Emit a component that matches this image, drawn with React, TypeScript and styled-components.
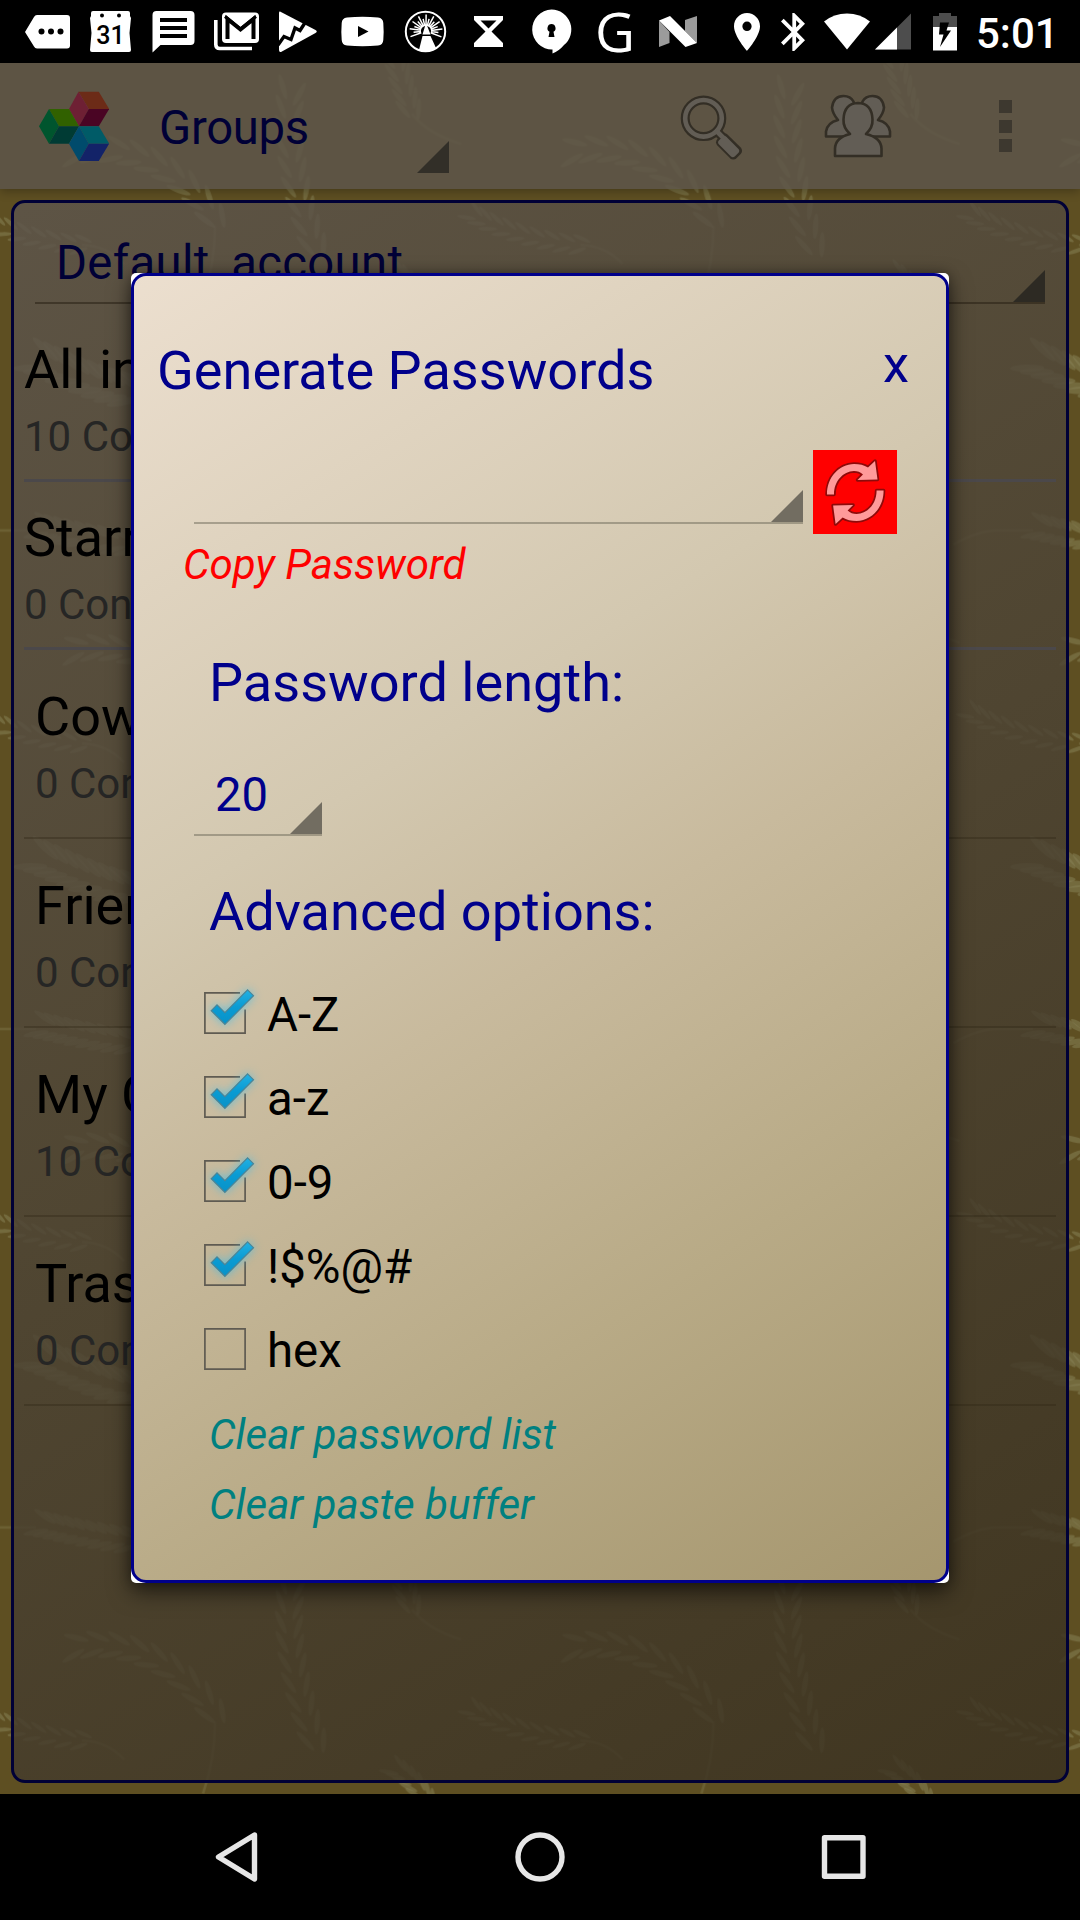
import React from 'react';
import styled, { createGlobalStyle, css } from 'styled-components';

const NAVY = '#00008b';
const NAVY_DIM = '#000036';

const GlobalStyle = createGlobalStyle`
  body {
    margin: 0;
    background: #000;
  }
  * {
    box-sizing: border-box;
  }
`;

const Phone = styled.div`
  display: flex;
  flex-direction: column;
  width: 1080px;
  height: 1920px;
  overflow: hidden;
  background: #000;
  font-family: Roboto, 'Liberation Sans', sans-serif;
`;

/* ---------- status bar ---------- */

const StatusBar = styled.header`
  display: flex;
  align-items: center;
  flex: none;
  height: 63px;
  padding-left: 16px;
  background: #000;
`;

const Slot = styled.svg`
  flex: none;
  width: 63px;
  height: 63px;
  overflow: visible;
  fill: #fff;
`;

const SystemIcon = styled.svg<{ $w: number; $gap: number }>`
  flex: none;
  width: ${(p) => p.$w}px;
  height: 38px;
  margin-left: ${(p) => p.$gap}px;
  fill: #fff;
`;

const Clock = styled.time`
  margin: 4px 0 0 19px;
  color: #fff;
  font-size: 42px;
  font-weight: 500;
  line-height: 50px;
`;

/* ---------- activity ---------- */

const Activity = styled.main`
  position: relative;
  display: flex;
  flex-direction: column;
  flex: none;
  height: 1731px;
  background: #5e4f22;
`;

const Backdrop = styled.svg`
  position: absolute;
  inset: 0;
  width: 1080px;
  height: 1731px;
`;

const AppBar = styled.div`
  position: relative;
  display: flex;
  align-items: center;
  flex: none;
  height: 126px;
  padding-left: 39px;
  background: rgba(93, 85, 73, 0.88);
  box-shadow: 0 2px 10px rgba(0, 0, 0, 0.3);
`;

const Logo = styled.svg`
  width: 70px;
  height: 70px;
`;

const BarSpinner = styled.div`
  display: flex;
  align-items: center;
  justify-content: space-between;
  width: 290px;
  height: 126px;
  margin-left: 50px;
  color: ${NAVY_DIM};
  font-size: 47.25px;
  line-height: 56px;
`;

const BarTitle = styled.span`
  padding-top: 4px;
  letter-spacing: -0.3px;
`;

const Corner = styled.i<{ $color: string }>`
  flex: none;
  align-self: flex-end;
  width: 32px;
  height: 32px;
  background: ${(p) => p.$color};
  clip-path: polygon(100% 0, 100% 100%, 0 100%);
`;

const BarCorner = styled(Corner)`
  margin-bottom: 16px;
`;

const BarIcon = styled.svg<{ $w: number; $gap: number }>`
  width: ${(p) => p.$w}px;
  height: 68px;
  margin-left: ${(p) => p.$gap}px;
  overflow: visible;
`;

const Overflow = styled.div`
  display: flex;
  flex-direction: column;
  gap: 6.5px;
  margin-left: 108px;
`;

const Dot = styled.i`
  width: 13px;
  height: 13px;
  background: #3d382f;
`;

const Panel = styled.section`
  position: relative;
  flex: 1;
  margin: 11px 11px 11px;
  padding: 19px 10px 0;
  border: 3px solid ${NAVY_DIM};
  border-radius: 14px;
  background: linear-gradient(
    148deg,
    rgba(93, 85, 76, 0.84),
    rgba(78, 69, 54, 0.84) 45%,
    rgba(58, 49, 32, 0.84)
  );
`;

const SpinnerBox = styled.div<{ $width: number; $height: number; $dim?: boolean }>`
  display: flex;
  flex: none;
  align-items: center;
  justify-content: space-between;
  width: ${(p) => p.$width}px;
  height: ${(p) => p.$height}px;
  padding-left: 21px;
  color: ${(p) => (p.$dim ? NAVY_DIM : NAVY)};
  font-size: 47.25px;
  line-height: 56px;
  ${(p) =>
    p.$dim
      ? css`
          border-bottom: 2px solid rgba(35, 28, 15, 0.5);
        `
      : css`
          border-bottom: 2px solid rgba(110, 105, 90, 0.5);
        `}
`;

const AccountSpinner = styled(SpinnerBox)`
  margin-left: 11px;
  letter-spacing: 0.33px;
`;

const List = styled.ul`
  margin: 10px 0 0;
  padding: 0;
  list-style: none;
`;

const Item = styled.li<{ $nested: boolean }>`
  height: ${(p) => (p.$nested ? 189 : 168)}px;
  padding: ${(p) => (p.$nested ? '34px 0 0 11px' : '23px 0 0 0')};
  border-bottom: ${(p) =>
    p.$nested ? '2px solid rgba(45, 36, 20, 0.35)' : '3px solid #4b484a'};
`;

const ItemTitle = styled.div`
  color: #000;
  font-size: 54px;
  line-height: 65px;
`;

const ItemCount = styled.div`
  margin-top: 10px;
  color: #262625;
  font-size: 42px;
  line-height: 49px;
`;

/* ---------- dialog ---------- */

const DialogLayer = styled.div`
  position: absolute;
  inset: 0;
  display: flex;
  align-items: center;
  justify-content: center;
`;

const Window = styled.div`
  width: 818px;
  height: 1310px;
  margin-bottom: 1px;
  border-radius: 5px;
  background: #fff;
  box-shadow: 0 9px 22px rgba(0, 0, 0, 0.55), 0 0 12px rgba(0, 0, 0, 0.3);
`;

const Dialog = styled.div`
  height: 100%;
  padding: 62px 49px 0 60px;
  border: 3px solid ${NAVY};
  border-radius: 15px;
  background: linear-gradient(148deg, #ecdfcf 0%, #d3c8b0 36%, #c8ba9d 52%, #b8aa86 74%, #a5966e 100%);
  background-clip: border-box;
  background-origin: border-box;
`;

const Header = styled.div`
  display: flex;
  justify-content: space-between;
  margin: 0 -12px 0 -37px;
  height: 65px;
  color: ${NAVY};
`;

const Title = styled.h1`
  margin: 0;
  font-size: 54.1px;
  font-weight: 400;
  line-height: 65px;
`;

const Close = styled.span`
  font-size: 52.5px;
  line-height: 52px;
`;

const GenerateRow = styled.div`
  display: flex;
  align-items: flex-start;
  gap: 10px;
  height: 84px;
  margin-top: 47px;
`;

const Refresh = styled.button`
  flex: none;
  width: 84px;
  height: 84px;
  padding: 0;
  border: 0;
  background: #f00;
`;

const LinkText = styled.div<{ $color: string; $height: number; $indent: number }>`
  height: ${(p) => p.$height}px;
  margin-left: ${(p) => p.$indent}px;
  color: ${(p) => p.$color};
  font-size: 42.1px;
  font-style: italic;
  line-height: ${(p) => p.$height}px;
`;

const Label = styled.div<{ $top: number }>`
  margin: ${(p) => p.$top}px 0 0 15px;
  color: ${NAVY};
  font-size: 54.1px;
  line-height: 71px;
`;

const LengthSpinner = styled(SpinnerBox)`
  margin-top: 36px;
`;

const SpinnerValue = styled.span`
  padding-top: 2px;
`;

const Options = styled.div`
  margin: 24px 0 9px 10px;
`;

const Option = styled.label`
  display: flex;
  align-items: center;
  gap: 21px;
  height: 84px;
  color: #000;
  font-size: 47.4px;
  line-height: 56px;
`;

const OptionText = styled.span`
  padding-top: 4px;
`;

const Box = styled.svg`
  width: 42px;
  height: 42px;
  overflow: visible;
`;

const Tick = styled.path`
  fill: url(#tick);
  stroke: #4b8496;
  stroke-width: 1.2;
  filter: drop-shadow(0 0 5px rgba(60, 190, 235, 0.7));
`;

/* ---------- navigation bar ---------- */

const NavBar = styled.nav`
  display: flex;
  align-items: center;
  justify-content: space-between;
  flex: 1;
  padding: 0 205px;
  background: #000;
`;

const NavIcon = styled.svg`
  width: 62px;
  height: 62px;
  fill: none;
  stroke: #e6e6e6;
  stroke-width: 5.4;
  stroke-linejoin: round;
`;

/* ---------- drawings ---------- */

type Ear = { pts: [number, number][]; size: number };

/** Heads of wheat: grains are laid alternately along each spine. */
const ears: Ear[] = [
  { pts: [[292, 92], [286, 142], [298, 197], [316, 246]], size: 15 },
  { pts: [[76, 150], [130, 141], [185, 170], [215, 218]], size: 15 },
  { pts: [[473, 213], [495, 227], [540, 242], [580, 244]], size: 11 },
  { pts: [[-25, 213], [-3, 227], [42, 242], [82, 244]], size: 11 },
  { pts: [[396, 272], [415, 284], [432, 304], [440, 334]], size: 12 },
  { pts: [[385, 8], [392, 44], [402, 80], [412, 110]], size: 13 },
  { pts: [[40, 358], [66, 368], [98, 384], [131, 390]], size: 20 },
  { pts: [[42, 28], [66, 33], [95, 40], [131, 44]], size: 15 },
];

const bezier = (p: [number, number][], t: number, axis: 0 | 1) => {
  const u = 1 - t;
  return u * u * u * p[0][axis] + 3 * u * u * t * p[1][axis] + 3 * u * t * t * p[2][axis] + t * t * t * p[3][axis];
};

const Grains = ({ ear }: { ear: Ear }) => (
  <>
    {Array.from({ length: 9 }, (_, i) => {
      const t = i / 8;
      const x = bezier(ear.pts, t, 0);
      const y = bezier(ear.pts, t, 1);
      const dx = bezier(ear.pts, t + 0.02, 0) - x;
      const dy = bezier(ear.pts, t + 0.02, 1) - y;
      const a = (Math.atan2(dy, dx) * 180) / Math.PI;
      return (
        <g key={i} transform={`translate(${x} ${y}) rotate(${a})`}>
          <ellipse cx={-ear.size * 0.5} cy={ear.size * 0.5} rx={ear.size * 0.85} ry={ear.size * 0.18} transform="rotate(-22)" />
          <ellipse cx={-ear.size * 0.1} cy={-ear.size * 0.5} rx={ear.size * 0.85} ry={ear.size * 0.18} transform="rotate(22)" />
        </g>
      );
    })}
  </>
);

const Wheat = () => (
  <Backdrop viewBox="0 63 1080 1731">
    <defs>
      <pattern id="wheat" width="498.5" height="498.5" patternUnits="userSpaceOnUse">
        <g fill="#858054" fillOpacity="0.55">
          {ears.map((ear, i) => (
            <Grains key={i} ear={ear} />
          ))}
        </g>
        <g fill="none" stroke="#858054" strokeWidth="2.5" opacity="0.35">
          <path d="M215 226 Q215 264 203 298 M82 245 Q108 246 124 264 M412 114 Q428 134 461 144 M0 32 H36 M455 46 Q480 32 499 32" />
        </g>
      </pattern>
    </defs>
    <rect x="0" y="63" width="1080" height="1731" fill="url(#wheat)" />
  </Backdrop>
);

const rays = Array.from({ length: 17 }, (_, i) => (-200 + i * 13.8) * (Math.PI / 180));

const StatusIcons = () => (
  <>
    <Slot viewBox="0 0 63 63">
      <path d="M21 15H51Q54 15 54 18V45.500Q54 48.500 51 48.500H21Q19 48.500 18 46.500L9 32L18 17Q19 15 21 15Z" />
      <g fill="#000">
        <circle cx="25.500" cy="31.500" r="3" />
        <circle cx="35" cy="31.500" r="3" />
        <circle cx="44.500" cy="31.500" r="3" />
      </g>
    </Slot>
    <Slot viewBox="0 0 63 63">
      <path d="M14 11H49Q51 11 51 13V16L52 18L50.500 33L52 50Q52 52 50 52H13Q11 52 11 50L12.500 33L11 18L12 16V13Q12 11 14 11Z" />
      <circle cx="23" cy="15.500" r="2" fill="#000" />
      <circle cx="40" cy="15.500" r="2" fill="#000" />
      <text x="31.500" y="44" fill="#000" fontSize="25" fontWeight="500" textAnchor="middle">31</text>
    </Slot>
    <Slot viewBox="0 0 63 63">
      <path d="M14.500 11H48.500Q52.500 11 52.500 15V41Q52.500 45 48.500 45H18.500L10.500 52.500V15Q10.500 11 14.500 11Z" />
      <path d="M18 18H45V22H18ZM18 26H45V30H18ZM18 34H45V38H18Z" fill="#000" />
    </Slot>
    <Slot viewBox="0 0 63 63">
      <rect x="17" y="12.500" width="37" height="30.500" rx="4" />
      <path d="M22.500 39V19L35.500 29.500L48.500 19V39" fill="none" stroke="#000" strokeWidth="4" />
      <path d="M20 16.500L35.500 29L51 16.500" fill="none" stroke="#000" strokeWidth="3" />
      <path d="M10.800 20V44.500Q10.800 48.500 14.800 48.500H47" fill="none" stroke="#fff" strokeWidth="3.600" />
    </Slot>
    <Slot viewBox="0 0 63 63">
      <path d="M12 11.500L47.500 30Q50 31.500 47.500 33L13 52Q11 52.500 11 50V13Q11 11 12 11.500Z" />
      <path d="M10 45L16 36.500L23 39.500L27 28L32 30.500L37.500 22" fill="none" stroke="#000" strokeWidth="3.400" />
    </Slot>
    <Slot viewBox="0 0 63 63">
      <path d="M16 17.500Q31.500 16 47 17.500Q52 18 52.300 23Q53 31.500 52.300 40Q52 45 47 45.500Q31.500 47 16 45.500Q11 45 10.700 40Q10 31.500 10.700 23Q11 18 16 17.500Z" />
      <path d="M27 26L37.500 31.500L27 37Z" fill="#000" />
    </Slot>
    <Slot viewBox="0 0 63 63">
      <circle cx="31.500" cy="31.500" r="19.700" fill="none" stroke="#fff" strokeWidth="2" />
      <path
        d={rays.map((a, i) => {
          const r = i % 2 ? 12.5 : 16.5;
          return `M${32 + 5 * Math.cos(a)} ${31 + 5 * Math.sin(a)}L${32 + r * Math.cos(a)} ${31 + r * Math.sin(a)}`;
        }).join('')}
        stroke="#fff"
        strokeWidth="1.500"
      />
      <path d="M32 23L36.500 34.500H28.500ZM28.500 36H36.500L42 48Q32 54.500 25 50Z" />
    </Slot>
    <Slot viewBox="0 0 63 63">
      <path d="M17 16H46V20L34.500 31.500L46 43V47H17V43L28.500 31.500L17 20ZM23.500 20.500L31.500 28.500L39.500 20.500Z" fillRule="evenodd" />
    </Slot>
    <Slot viewBox="0 0 63 63">
      <path d="M31.500 9.500A19.800 20 0 0 1 44 45Q39 51 32.500 53.500V49.500A19.800 20 0 1 1 31.500 9.500Z" />
      <path d="M31.500 24A4.200 4.200 0 0 1 33.500 31.800L34.500 37H28.500L29.500 31.800A4.200 4.200 0 0 1 31.500 24Z" fill="#000" />
    </Slot>
    <Slot viewBox="0 0 63 63">
      <text x="32" y="51.500" fontFamily="'Open Sans', sans-serif" fontSize="55" textAnchor="middle">G</text>
    </Slot>
    <Slot viewBox="0 0 63 63">
      <path d="M13 20.500L23.500 32V43L13 47ZM39 20L51 16V43L39 31Z" fill="#9b9b9b" />
      <path d="M13 20.500L24 16L51 43L39.500 47Z" />
    </Slot>
    <SystemIcon $w={26} $gap={25} viewBox="5 2 14 20" preserveAspectRatio="none">
      <path d="M12 2C8.130 2 5 5.130 5 9c0 5.250 7 13 7 13s7-7.750 7-13c0-3.870-3.130-7-7-7zm0 9.500a2.500 2.500 0 0 1 0-5 2.500 2.500 0 0 1 0 5z" />
    </SystemIcon>
    <SystemIcon $w={24} $gap={21} viewBox="5 2 12.7 20" preserveAspectRatio="none">
      <path d="M17.710 7.710L12 2h-1v7.590L6.410 5 5 6.410 10.590 12 5 17.590 6.410 19 11 14.410V22h1l5.710-5.710-4.300-4.290 4.300-4.290zM13 5.830l1.880 1.880L13 9.590V5.830zm1.880 10.460L13 18.170v-3.760l1.880 1.880z" />
    </SystemIcon>
    <SystemIcon $w={46} $gap={19} viewBox="824 12.5 46 38">
      <path d="M824 21Q834 13 847 13Q860 13 870 21L847 49Z" />
    </SystemIcon>
    <SystemIcon $w={36} $gap={5} viewBox="875 12.500 36 38">
      <path d="M875 49L911 13V49Z" fill="#4d4d4d" />
      <path d="M875 49L897 27V49Z" />
    </SystemIcon>
    <SystemIcon $w={24} $gap={22} viewBox="933 12.500 24 38">
      <path d="M933 15.500H939V12.500H951V15.500H957V27H933Z" fill="#4d4d4d" />
      <path d="M933 26.500H957V50H933Z" />
      <path d="M940 22H949L946.500 30H951L940 46.500L943.500 34H939Z" fill="#000" />
    </SystemIcon>
  </>
);

const CubesLogo = () => (
  <Logo viewBox="39 91 70 70">
    <path d="M78.500 91.700H98.800L109.200 109H88.800Z" fill="#6c2b17" />
    <path d="M78.500 91.700L88.800 109L79 126.300L69 109Z" fill="#6e2034" />
    <path d="M88.800 109H109.200L98.800 126.300H79Z" fill="#4a0524" />
    <path d="M49 109H69L79 126.300H59Z" fill="#316100" />
    <path d="M49 109L59 126.300L49 143.700L39 126.300Z" fill="#00552e" />
    <path d="M59 126.300H79L69 143.700H49Z" fill="#003b34" />
    <path d="M79 126.300H98.800L109.200 143.700H88.800Z" fill="#005b67" />
    <path d="M79 126.300L88.800 143.700L79 161L69 143.700Z" fill="#004b6c" />
    <path d="M88.800 143.700H109.200L98.800 161H79Z" fill="#132368" />
  </Logo>
);

const SearchIcon = () => (
  <BarIcon $w={62} $gap={231.5} viewBox="680.500 92 62 68">
    <g fill="none" stroke="#332e25" strokeLinecap="round">
      <circle cx="703" cy="118.300" r="18.300" strokeWidth="9" />
      <path d="M717 132L722 137" strokeWidth="9" />
    </g>
    <rect x="719" y="129.500" width="27" height="15" rx="4.500" fill="#332e25" transform="rotate(45 719 137)" />
    <g fill="none" stroke="#625d55" strokeLinecap="round">
      <circle cx="703" cy="118.300" r="18.300" strokeWidth="4.600" />
      <path d="M717 132L724 139" strokeWidth="4.600" />
    </g>
    <rect x="721" y="132" width="22.500" height="10.600" rx="3" fill="#625d55" transform="rotate(45 719 137)" />
  </BarIcon>
);

const PeopleIcon = () => (
  <BarIcon $w={66} $gap={82.5} viewBox="825.500 91.500 66 68">
    <g fill="#625d55" stroke="#332e25" strokeWidth="2.600" strokeLinejoin="round">
      <path d="M826.500 136V131Q828 122 838.500 119.500Q833 113 832.500 107Q834 95.500 844 95.500Q851 95.500 854 101L860 136Z" />
      <path d="M890.500 136V131Q889 122 878.500 119.500Q884 113 884.500 107Q883 95.500 873 95.500Q866 95.500 863 101L857 136Z" />
      <path d="M858.500 102.500Q872.500 103 873 119Q873.500 127 866.500 133.500Q881.500 137 882 148V155.500H835.500V148Q836 137 850.500 133.500Q843.500 127 844 119Q844.500 103 858.500 102.500Z" />
    </g>
  </BarIcon>
);

const arrow = 'M14 44.500C14 27 26 14.500 41 14C46.500 14 51 15 55 17.500L62 11L64.500 29.500L44.500 30L50 24.500C47.500 22 44.500 21 41 21C30 21.500 21 31 21 44.500Z';

const RefreshIcon = () => (
  <svg width="84" height="84" viewBox="0 0 84 84">
    <g fill="#ff9a9a" stroke="#8e0a0a" strokeWidth="3.500" strokeLinejoin="round" paintOrder="stroke">
      <path d={arrow} />
      <path d={arrow} transform="rotate(180 42.300 42.500)" />
    </g>
  </svg>
);

const CheckBox = ({ checked }: { checked: boolean }) => (
  <Box viewBox="0 0 42 42">
    <path
      d={checked ? 'M36 0.900H0.900V41.100H41.100V17.500' : 'M0.900 0.900H41.100V41.100H0.900Z'}
      fill="none"
      stroke="#5f5b52"
      strokeWidth="1.700"
    />
    {checked && <Tick d="M43.600 -2.200L49.500 3.700L20.900 32.300L7.200 18.800L13 12.800L20.900 20.700Z" />}
  </Box>
);

/* ---------- data ---------- */

const groups = [
  { name: 'All in', count: '10 Co', nested: false },
  { name: 'Starr', count: '0 Con', nested: false },
  { name: 'Cow', count: '0 Con', nested: true },
  { name: 'Frien', count: '0 Con', nested: true },
  { name: 'My C', count: '10 Co', nested: true },
  { name: 'Tras', count: '0 Con', nested: true },
];

const options = [
  { label: 'A-Z', checked: true },
  { label: 'a-z', checked: true },
  { label: '0-9', checked: true },
  { label: '!$%@#', checked: true },
  { label: 'hex', checked: false },
];

export default function App() {
  return (
    <Phone>
      <GlobalStyle />
      <StatusBar>
        <StatusIcons />
        <Clock>5:01</Clock>
      </StatusBar>

      <Activity>
        <Wheat />
        <AppBar>
          <CubesLogo />
          <BarSpinner>
            <BarTitle>Groups</BarTitle>
            <BarCorner $color="#322f28" />
          </BarSpinner>
          <SearchIcon />
          <PeopleIcon />
          <Overflow>
            <Dot />
            <Dot />
            <Dot />
          </Overflow>
        </AppBar>

        <Panel>
          <AccountSpinner $width={1010} $height={82} $dim>
            <SpinnerValue>Default_account</SpinnerValue>
            <Corner $color="#2d2a23" />
          </AccountSpinner>
          <List>
            {groups.map((g) => (
              <Item key={g.name} $nested={g.nested}>
                <ItemTitle>{g.name}</ItemTitle>
                <ItemCount>{g.count}</ItemCount>
              </Item>
            ))}
          </List>
        </Panel>

        <DialogLayer>
          <Window>
            <Dialog>
              <Header>
                <Title>Generate Passwords</Title>
                <Close>x</Close>
              </Header>

              <GenerateRow>
                <SpinnerBox $width={609} $height={74}>
                  <span />
                  <Corner $color="#726d61" />
                </SpinnerBox>
                <Refresh>
                  <RefreshIcon />
                </Refresh>
              </GenerateRow>
              <LinkText $color="#ff0000" $height={61} $indent={-11}>
                Copy Password
              </LinkText>

              <Label $top={52}>Password length:</Label>
              <LengthSpinner $width={128} $height={82}>
                <SpinnerValue>20</SpinnerValue>
                <Corner $color="#726d61" />
              </LengthSpinner>

              <Label $top={40}>Advanced options:</Label>
              <svg width="0" height="0" style={{ display: 'block' }}>
                <linearGradient id="tick" x1="0" y1="0" x2="0" y2="1">
                  <stop offset="0" stopColor="#22b0e2" />
                  <stop offset="0.5" stopColor="#0a9bd3" />
                  <stop offset="1" stopColor="#0892c8" />
                </linearGradient>
              </svg>
              <Options>
                {options.map((o) => (
                  <Option key={o.label}>
                    <CheckBox checked={o.checked} />
                    <OptionText>{o.label}</OptionText>
                  </Option>
                ))}
              </Options>

              <LinkText $color="#008080" $height={70} $indent={15}>
                Clear password list
              </LinkText>
              <LinkText $color="#008080" $height={70} $indent={15}>
                Clear paste buffer
              </LinkText>
            </Dialog>
          </Window>
        </DialogLayer>
      </Activity>

      <NavBar>
        <NavIcon viewBox="0 0 62 62">
          <path d="M49 9L13 31L49 53Z" transform="translate(0.500 0)" />
        </NavIcon>
        <NavIcon viewBox="0 0 62 62">
          <circle cx="31" cy="31" r="22" />
        </NavIcon>
        <NavIcon viewBox="0 0 62 62">
          <rect x="11.500" y="11.700" width="38.500" height="38.500" />
        </NavIcon>
      </NavBar>
    </Phone>
  );
}
